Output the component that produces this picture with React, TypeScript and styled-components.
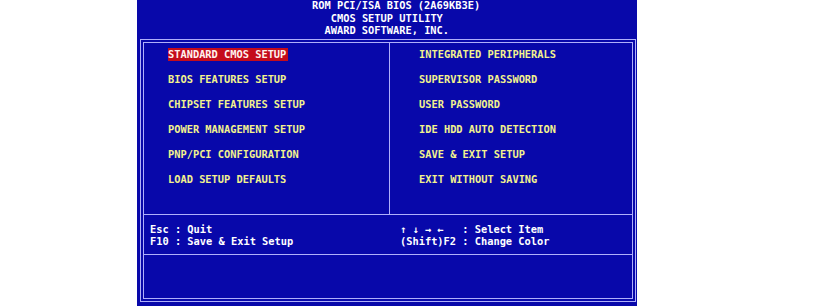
import React from "react";
import styled, { createGlobalStyle } from "styled-components";

const GlobalStyle = createGlobalStyle`
  html, body {
    margin: 0;
    padding: 0;
    background: #ffffff;
  }
`;

// one text cell of the 80x25 screen, scaled down
const CHAR_W = 6.25;
const ROW_H = 12.5;

const BIOS_BLUE = "#0808aa";
const FRAME = "#b0b0fa";
const MENU_YELLOW = "#f2f28e";

const Page = styled.div`
  width: 823px;
  height: 308px;
  background: #ffffff;
  overflow: hidden;
`;

const Screen = styled.div`
  margin-left: 137px;
  width: 500px;
  height: 306px;
  background: ${BIOS_BLUE};
  font-family: "DejaVu Sans Mono", "Liberation Mono", monospace;
  font-size: 10.35px;
  font-weight: bold;
  line-height: ${ROW_H}px;
  display: flex;
  flex-direction: column;
  overflow: hidden;
`;

const Header = styled.div`
  margin-top: -1px;
  height: 40px;
  flex-shrink: 0;
  color: #ffffff;
`;

const HeaderLine = styled.div<{ $col: number }>`
  padding-left: ${(p) => p.$col * CHAR_W}px;
  white-space: pre;
`;

const Frame = styled.div`
  margin-left: 3px;
  width: 496px;
  height: 263px;
  box-sizing: border-box;
  border: 4px double ${FRAME};
  display: flex;
  flex-direction: column;
`;

const MenuArea = styled.div`
  height: 171px;
  flex-shrink: 0;
  display: grid;
  grid-template-columns: 245px 1px 1fr;
`;

const VLine = styled.div`
  background: ${FRAME};
`;

const HLine = styled.div`
  height: 1px;
  flex-shrink: 0;
  background: ${FRAME};
`;

const MenuColumn = styled.ul<{ $indent: number }>`
  list-style: none;
  margin: 0;
  padding: 5px 0 0 ${(p) => p.$indent}px;
  display: flex;
  flex-direction: column;
  gap: ${ROW_H}px;
  color: ${MENU_YELLOW};
`;

const MenuItem = styled.li`
  height: ${ROW_H}px;
  white-space: pre;
`;

const MenuLabel = styled.span<{ $selected?: boolean }>`
  display: inline-block;
  padding-right: ${(p) => (p.$selected ? 2 : 0)}px;
  background: ${(p) => (p.$selected ? "#c40c1c" : "transparent")};
  color: ${(p) => (p.$selected ? "#fff2ee" : MENU_YELLOW)};
`;

const Footer = styled.div`
  height: 39px;
  flex-shrink: 0;
  box-sizing: border-box;
  padding-top: 7.5px;
  display: grid;
  grid-template-columns: 256px 1fr;
  color: #ffffff;
`;

const HelpBlock = styled.div<{ $indent: number }>`
  padding-left: ${(p) => p.$indent}px;
  white-space: pre;
`;

const Blank = styled.div`
  flex: 1;
`;

const leftMenu = [
  "STANDARD CMOS SETUP",
  "BIOS FEATURES SETUP",
  "CHIPSET FEATURES SETUP",
  "POWER MANAGEMENT SETUP",
  "PNP/PCI CONFIGURATION",
  "LOAD SETUP DEFAULTS",
];

const rightMenu = [
  "INTEGRATED PERIPHERALS",
  "SUPERVISOR PASSWORD",
  "USER PASSWORD",
  "IDE HDD AUTO DETECTION",
  "SAVE & EXIT SETUP",
  "EXIT WITHOUT SAVING",
];

const App: React.FC = () => {
  const selected = "STANDARD CMOS SETUP";

  return (
    <Page>
      <GlobalStyle />
      <Screen>
        <Header>
          <HeaderLine $col={28}>ROM PCI/ISA BIOS (2A69KB3E)</HeaderLine>
          <HeaderLine $col={31}>CMOS SETUP UTILITY</HeaderLine>
          <HeaderLine $col={30}>AWARD SOFTWARE, INC.</HeaderLine>
        </Header>
        <Frame>
          <MenuArea>
            <MenuColumn $indent={24}>
              {leftMenu.map((item) => (
                <MenuItem key={item}>
                  <MenuLabel $selected={item === selected}>{item}</MenuLabel>
                </MenuItem>
              ))}
            </MenuColumn>
            <VLine />
            <MenuColumn $indent={29}>
              {rightMenu.map((item) => (
                <MenuItem key={item}>
                  <MenuLabel $selected={item === selected}>{item}</MenuLabel>
                </MenuItem>
              ))}
            </MenuColumn>
          </MenuArea>
          <HLine />
          <Footer>
            <HelpBlock $indent={6}>
              <div>Esc : Quit</div>
              <div>F10 : Save &amp; Exit Setup</div>
            </HelpBlock>
            <HelpBlock $indent={0}>
              <div>{"\u2191 \u2193 \u2192 \u2190   : Select Item"}</div>
              <div>(Shift)F2 : Change Color</div>
            </HelpBlock>
          </Footer>
          <HLine />
          <Blank />
        </Frame>
      </Screen>
    </Page>
  );
};

export default App;
